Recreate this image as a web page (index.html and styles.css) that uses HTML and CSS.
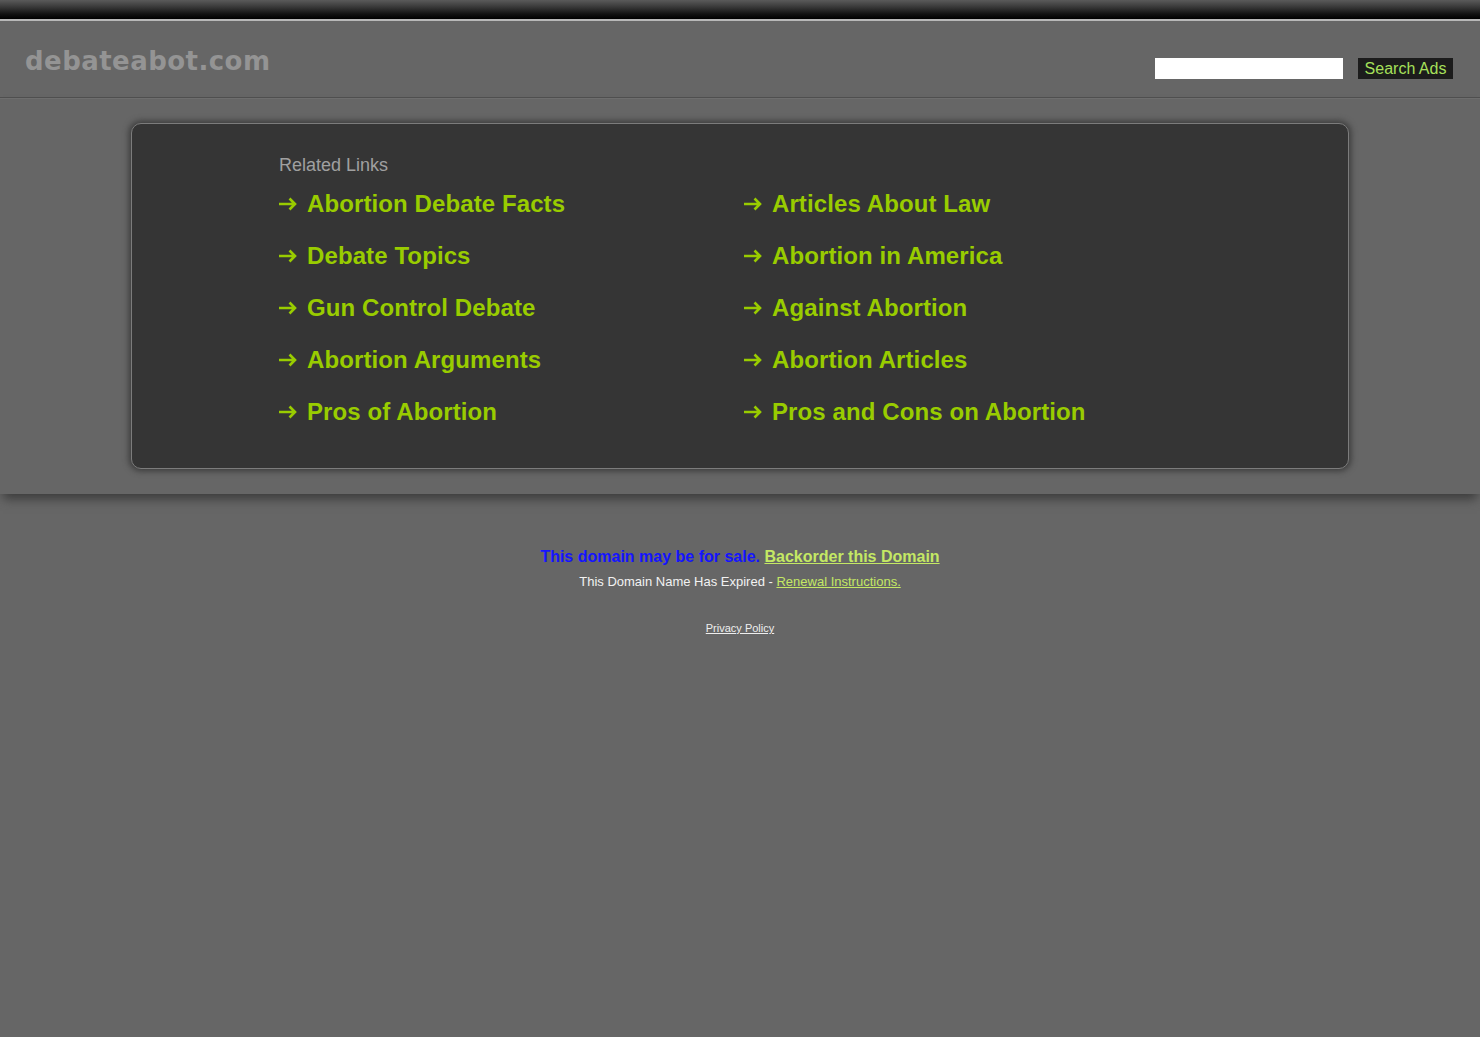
FILE: index.html
```html
<!DOCTYPE html>
<html>
<head>
<meta charset="utf-8">
<title>debateabot.com</title>
<link rel="stylesheet" href="styles.css">
</head>
<body>
<div class="topbar"></div>
<div class="header">
  <div class="logo">debateabot.com</div>
  <form class="search">
    <input class="search-input" type="text">
    <button class="search-btn" type="button">Search Ads</button>
  </form>
</div>
<div class="main">
  <div class="panel">
    <div class="panel-title">Related Links</div>
    <div class="links">
      <a class="link" href="#"><svg class="arrow" viewBox="0 0 19 14"><path d="M1 7H17M11.5 1.5L17 7L11.5 12.5"/></svg>Abortion Debate Facts</a>
      <a class="link" href="#"><svg class="arrow" viewBox="0 0 19 14"><path d="M1 7H17M11.5 1.5L17 7L11.5 12.5"/></svg>Articles About Law</a>
      <a class="link" href="#"><svg class="arrow" viewBox="0 0 19 14"><path d="M1 7H17M11.5 1.5L17 7L11.5 12.5"/></svg>Debate Topics</a>
      <a class="link" href="#"><svg class="arrow" viewBox="0 0 19 14"><path d="M1 7H17M11.5 1.5L17 7L11.5 12.5"/></svg>Abortion in America</a>
      <a class="link" href="#"><svg class="arrow" viewBox="0 0 19 14"><path d="M1 7H17M11.5 1.5L17 7L11.5 12.5"/></svg>Gun Control Debate</a>
      <a class="link" href="#"><svg class="arrow" viewBox="0 0 19 14"><path d="M1 7H17M11.5 1.5L17 7L11.5 12.5"/></svg>Against Abortion</a>
      <a class="link" href="#"><svg class="arrow" viewBox="0 0 19 14"><path d="M1 7H17M11.5 1.5L17 7L11.5 12.5"/></svg>Abortion Arguments</a>
      <a class="link" href="#"><svg class="arrow" viewBox="0 0 19 14"><path d="M1 7H17M11.5 1.5L17 7L11.5 12.5"/></svg>Abortion Articles</a>
      <a class="link" href="#"><svg class="arrow" viewBox="0 0 19 14"><path d="M1 7H17M11.5 1.5L17 7L11.5 12.5"/></svg>Pros of Abortion</a>
      <a class="link" href="#"><svg class="arrow" viewBox="0 0 19 14"><path d="M1 7H17M11.5 1.5L17 7L11.5 12.5"/></svg>Pros and Cons on Abortion</a>
    </div>
  </div>
</div>
<div class="footer">
  <div class="sale"><span class="sale-text">This domain may be for sale.</span> <a class="sale-link" href="#">Backorder this Domain</a></div>
  <div class="expired">This Domain Name Has Expired - <a class="renew" href="#">Renewal Instructions.</a></div>
  <div class="privacy"><a href="#">Privacy Policy</a></div>
</div>
</body>
</html>
```
FILE: styles.css
```css
html, body {
  margin: 0;
  padding: 0;
}
body {
  background: #666666;
  font-family: "Liberation Sans", Arial, sans-serif;
  height: 1037px;
}
.topbar {
  height: 19px;
  background: linear-gradient(to bottom, #5a5a5a 0%, #3a3a3a 35%, #111 75%, #000 100%);
  border-bottom: 2px solid #b8b8b8;
}
.header {
  height: 76px;
  border-bottom: 1px solid #505050;
  display: flex;
  justify-content: space-between;
  align-items: flex-start;
  padding: 0 27px 0 25px;
  box-shadow: 0 1px 0 #6e6e6e;
}
.logo {
  font-family: "DejaVu Sans", Verdana, sans-serif;
  font-weight: bold;
  font-size: 26px;
  color: #949494;
  margin-top: 25px;
  letter-spacing: 0.45px;
}
.search {
  display: flex;
  gap: 15px;
  margin: 37px 0 0 0;
}
.search-input {
  width: 188px;
  height: 21px;
  border: none;
  padding: 0;
  background: #fff;
  box-sizing: border-box;
}
.search-btn {
  height: 21px;
  width: 95px;
  padding: 0;
  border: none;
  background: #1c1c1c;
  color: #a6e05a;
  font-family: "Liberation Sans", Arial, sans-serif;
  font-size: 16px;
  line-height: 21px;
}
.main {
  height: 396px;
  padding-top: 25px;
  box-sizing: border-box;
  box-shadow: 0 8px 10px -3px #3c3c3c;
  position: relative;
}
.panel {
  width: 1218px;
  height: 346px;
  margin: 0 0 0 131px;
  box-sizing: border-box;
  background: #353535;
  border: 1px solid #7c7c7c;
  border-radius: 10px;
  box-shadow: 0 0 6px 2px #3a3a3a;
  padding: 29px 0 0 147px;
}
.panel-title {
  font-size: 18px;
  color: #a0a0a0;
  line-height: 24px;
}
.links {
  display: grid;
  grid-template-columns: 465px 465px;
  grid-auto-rows: 52px;
  margin-top: 12px;
}
.link {
  display: flex;
  align-items: center;
  height: 30px;
  font-size: 24px;
  font-weight: bold;
  color: #99cc00;
  text-decoration: none;
  white-space: nowrap;
  letter-spacing: 0.1px;
}
.arrow {
  width: 19px;
  height: 14px;
  margin: 0 10px 0 -1px;
  fill: none;
  stroke: #99cc00;
  stroke-width: 2.6;
  flex: none;
}
.footer {
  text-align: center;
  padding-top: 52px;
}
.sale {
  font-size: 16px;
  font-weight: bold;
  line-height: 22px;
}
.sale-text {
  color: #1414ff;
}
.sale-link {
  color: #c4e864;
}
.expired {
  font-size: 13px;
  color: #f2f2f2;
  margin-top: 5px;
  line-height: 18px;
}
.renew {
  color: #c4e864;
}
.privacy {
  margin-top: 30px;
  font-size: 11px;
  line-height: 14px;
}
.privacy a {
  color: #eeeeee;
}
```
